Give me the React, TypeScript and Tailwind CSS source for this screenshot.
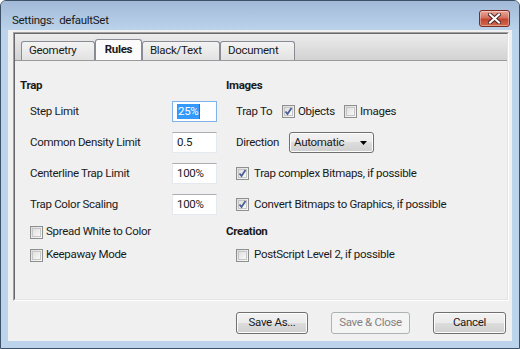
import React from "react";

const font = { fontFamily: '"Roboto", "Liberation Sans", sans-serif' };

function Check({ checked }: { checked?: boolean }) {
  return (
    <div className="w-[13px] h-[13px] border border-[#8e8f8f] bg-[linear-gradient(135deg,#dcdcdc,#fafafa)] p-[1px] shrink-0">
      <div className="w-full h-full border border-[#c6c6c6] bg-[linear-gradient(135deg,#e0e0e0,#f8f8f8)] relative">
        {checked && (
          <svg width="11" height="11" viewBox="0 0 11 11" className="absolute -left-[2px] -top-[2px]">
            <path d="M2.5 5.5 L4.5 8 L8.5 2" stroke="#4a5f97" strokeWidth="1.8" fill="none" />
          </svg>
        )}
      </div>
    </div>
  );
}

function Field({ value, focused }: { value: string; focused?: boolean }) {
  return (
    <div
      className={`w-[45px] h-[21px] bg-white border flex items-center pl-[4px] text-[#1a1a1a] ${
        focused ? "border-[#7eb4ea]" : "border-[#e3e9ef] border-t-[#abadb3]"
      }`}
    >
      {focused ? (
        <span className="bg-[#3399ff] text-white leading-[15px] px-[1px] border-r border-[#cc4400]">{value}</span>
      ) : (
        <span>{value}</span>
      )}
    </div>
  );
}

function Btn({ label, disabled, w }: { label: string; disabled?: boolean; w: string }) {
  return (
    <div
      className={`${w} h-[22px] rounded-[3px] border flex items-center justify-center ${
        disabled
          ? "border-[#adb2b5] bg-[#f4f4f4] text-[#838383]"
          : "border-[#707070] bg-[linear-gradient(#f2f2f2_0%,#ebebeb_50%,#dddddd_50%,#cfcfcf_100%)] text-[#1a1a1a] shadow-[inset_0_0_0_1px_#fcfcfc]"
      }`}
    >
      {label}
    </div>
  );
}

function Tab({ label, selected, w }: { label: string; selected?: boolean; w: string }) {
  return (
    <div
      className={`${w} border border-b-0 rounded-t-[3px] flex items-center text-[#1a1a1a] ${
        selected
          ? "h-[21px] border-[#898c95] bg-[#fbfbfb] font-bold justify-center"
          : "h-[19px] border-[#898c95] bg-[linear-gradient(#f3f3f3,#e2e2e2)] pl-[7px]"
      }`}
    >
      {label}
    </div>
  );
}

export default function App() {
  return (
    <div style={font} className="w-[520px] h-[349px] bg-white text-[11.5px] tracking-[-0.3px]">
      <div className="w-[520px] h-[349px] rounded-t-[6px] border border-[#3f5167] bg-[#bcd3ec] flex flex-col">
        {/* title bar */}
        <div className="h-[29px] flex items-start bg-[linear-gradient(#a2bad8,#bbd2eb)] rounded-t-[5px]">
          <div className="pl-[11px] pt-[12px] leading-[15px] text-[#1a1a1a] whitespace-pre">Settings:  defaultSet</div>
          <div className="ml-auto mr-[9px] mt-[9px] w-[31px] h-[17px] rounded-[3px] border border-[#7e2b21] bg-[linear-gradient(#e9a99a_0%,#d6715f_45%,#c4452f_55%,#cf6a4d_100%)] shadow-[inset_0_0_0_1px_rgba(255,255,255,0.35)] flex items-center justify-center">
            <svg width="13" height="11" viewBox="0 0 13 11">
              <path d="M2 1.5 L11 9.5 M11 1.5 L2 9.5" stroke="#4a2a2a" strokeWidth="4" strokeLinecap="square" />
              <path d="M2 1.5 L11 9.5 M11 1.5 L2 9.5" stroke="#ffffff" strokeWidth="2" strokeLinecap="square" />
            </svg>
          </div>
        </div>
        {/* body */}
        <div className="flex-1 px-[7px] pb-[7px] flex">
          <div className="flex-1 bg-[#f0f0f0] flex flex-col">
            {/* tab panel */}
            <div className="mt-[2px] ml-[5px] mr-[3px] h-[269px] border border-[#a0a0a0] border-r-white border-b-white">
              <div className="w-full h-full border border-[#696969] border-r-[#e3e3e3] border-b-[#e3e3e3] flex flex-col">
                <div className="h-[27px] bg-[linear-gradient(#ececec,#d2d2d2)] flex items-end pl-[6px] border-b border-[#9a9a9a]">
                  <Tab label="Geometry" w="w-[74px]" />
                  <Tab label="Rules" selected w="w-[47px]" />
                  <Tab label="Black/Text" w="w-[78px]" />
                  <Tab label="Document" w="w-[75px]" />
                </div>
                <div className="flex-1 flex text-[#1a1a1a] pl-[5px] pt-[17px]">
                  {/* left column */}
                  <div className="w-[206px] flex flex-col">
                    <div className="h-[16px] flex items-center font-bold">Trap</div>
                    <div className="mt-[7px] h-[21px] flex items-center pl-[10px]">
                      <span className="w-[142px]">Step Limit</span>
                      <Field value="25%" focused />
                    </div>
                    <div className="mt-[10px] h-[21px] flex items-center pl-[10px]">
                      <span className="w-[142px]">Common Density Limit</span>
                      <Field value="0.5" />
                    </div>
                    <div className="mt-[10px] h-[21px] flex items-center pl-[10px]">
                      <span className="w-[142px]">Centerline Trap Limit</span>
                      <Field value="100%" />
                    </div>
                    <div className="mt-[10px] h-[21px] flex items-center pl-[10px]">
                      <span className="w-[142px]">Trap Color Scaling</span>
                      <Field value="100%" />
                    </div>
                    <div className="mt-[9px] h-[16px] flex items-center pl-[10px] gap-[3px]">
                      <Check />
                      <span>Spread White to Color</span>
                    </div>
                    <div className="mt-[7px] h-[16px] flex items-center pl-[10px] gap-[3px]">
                      <Check />
                      <span>Keepaway Mode</span>
                    </div>
                  </div>
                  {/* right column */}
                  <div className="flex-1 flex flex-col">
                    <div className="h-[16px] flex items-center font-bold">Images</div>
                    <div className="mt-[7px] h-[21px] flex items-center pl-[10px]">
                      <span className="w-[46px]">Trap To</span>
                      <Check checked />
                      <span className="ml-[3px] w-[46px]">Objects</span>
                      <Check />
                      <span className="ml-[3px]">Images</span>
                    </div>
                    <div className="mt-[10px] h-[21px] flex items-center pl-[10px]">
                      <span className="w-[53px]">Direction</span>
                      <div className="w-[85px] h-[21px] rounded-[3px] border border-[#707070] bg-[linear-gradient(#f2f2f2_0%,#ebebeb_50%,#dddddd_50%,#cfcfcf_100%)] shadow-[inset_0_0_0_1px_#fcfcfc] flex items-center pl-[4px]">
                        <span>Automatic</span>
                        <svg width="7" height="4" viewBox="0 0 7 4" className="ml-auto mr-[6px]">
                          <path d="M0 0 H7 L3.5 4 Z" fill="#000" />
                        </svg>
                      </div>
                    </div>
                    <div className="mt-[10px] h-[21px] flex items-center pl-[10px] gap-[5px]">
                      <Check checked />
                      <span>Trap complex Bitmaps, if possible</span>
                    </div>
                    <div className="mt-[10px] h-[21px] flex items-center pl-[10px] gap-[5px]">
                      <Check checked />
                      <span>Convert Bitmaps to Graphics, if possible</span>
                    </div>
                    <div className="mt-[9px] h-[16px] flex items-center font-bold">Creation</div>
                    <div className="mt-[7px] h-[16px] flex items-center pl-[10px] gap-[5px]">
                      <Check />
                      <span>PostScript Level 2, if possible</span>
                    </div>
                  </div>
                </div>
              </div>
            </div>
            {/* buttons */}
            <div className="mt-[11px] flex pl-[228px] gap-[23px]">
              <Btn label="Save As..." w="w-[72px]" />
              <Btn label="Save & Close" disabled w="w-[79px]" />
              <Btn label="Cancel" w="w-[73px]" />
            </div>
          </div>
        </div>
      </div>
    </div>
  );
}
